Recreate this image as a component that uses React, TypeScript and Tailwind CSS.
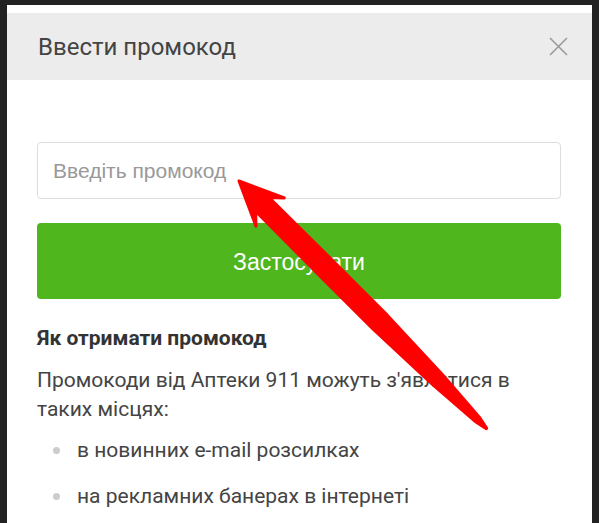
import React from 'react';

// arrow built along its own axis, then turned to page coords
const TIP = { x: 239, y: 181 };
const shape: [number, number][] = [
  [0, 0],
  [44, 20],
  [33, 9.5],
  [120, 10],
  [200, 10],
  [281, 7],
  [338, 2.8],
  [350, 0.3],
];

function arrowPath() {
  const d = { x: Math.SQRT1_2, y: Math.SQRT1_2 };
  const n = { x: Math.SQRT1_2, y: -Math.SQRT1_2 };
  const pt = (a: number, p: number) =>
    `${(TIP.x + a * d.x + p * n.x).toFixed(1)},${(TIP.y + a * d.y + p * n.y).toFixed(1)}`;
  const right = shape.map(([a, p]) => pt(a, p));
  const left = shape
    .slice(1)
    .reverse()
    .map(([a, p]) => pt(a, -p));
  return 'M' + [...right, ...left].join(' L') + ' Z';
}

export default function App() {
  return (
    <div className="relative h-[523px] w-[599px] overflow-hidden bg-[#222222] pl-[7px] pt-[5px] pr-[7px]">
      <div className="h-full w-[585px] bg-white pt-[8px] font-['Roboto',sans-serif]">
        {/* Header */}
        <div className="flex h-[67px] items-center justify-between bg-[#ececec] pl-[31px] pr-[24px]">
          <h2 className="text-[24px] leading-none text-[#444]">Ввести промокод</h2>
          <svg width="19" height="19" viewBox="0 0 19 19" className="text-[#999]">
            <path d="M1 1 L18 18 M18 1 L1 18" stroke="currentColor" strokeWidth="1.6" />
          </svg>
        </div>

        {/* Body */}
        <div className="px-[30px] pt-[62px]">
          <input
            type="text"
            placeholder="Введіть промокод"
            className="block h-[57px] w-[524px] rounded-[4px] border border-[#dddddd] px-[15px] font-['Liberation_Sans',sans-serif] text-[21px] text-[#333] placeholder:text-[#999] focus:outline-none"
          />
          <button className="mt-[24px] flex h-[76px] w-[524px] items-center justify-center rounded-[4px] bg-[#4fb61e] pt-[2px] font-['Liberation_Sans',sans-serif] text-[23px] text-white">
            Застосувати
          </button>

          <h3 className="mt-[27px] text-[21px] font-bold leading-[24px] text-[#333]">
            Як отримати промокод
          </h3>
          <p className="mt-[16px] text-[21px] leading-[29px] text-[#444]">
            Промокоди від Аптеки 911 можуть з'являтися в
            <br />
            таких місцях:
          </p>
          <ul className="mt-[12px] flex flex-col gap-[17px] text-[21px] leading-[29px] text-[#444]">
            <li className="flex items-start">
              <span className="ml-[16px] mr-[17px] mt-[11px] h-[7px] w-[7px] shrink-0 rounded-full bg-[#cccccc]" />
              в новинних e-mail розсилках
            </li>
            <li className="flex items-start">
              <span className="ml-[16px] mr-[17px] mt-[11px] h-[7px] w-[7px] shrink-0 rounded-full bg-[#cccccc]" />
              на рекламних банерах в інтернеті
            </li>
          </ul>
        </div>
      </div>

      {/* red arrow drawn over the form */}
      <svg
        className="pointer-events-none absolute left-0 top-0"
        width="599"
        height="523"
        viewBox="0 0 599 523"
      >
        <path d={arrowPath()} fill="#ff0000" stroke="#ff0000" strokeWidth="3" strokeLinejoin="round" />
      </svg>
    </div>
  );
}
